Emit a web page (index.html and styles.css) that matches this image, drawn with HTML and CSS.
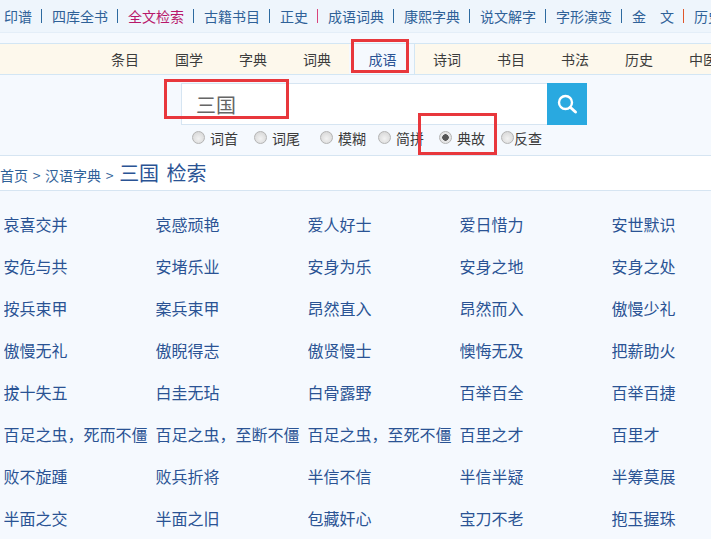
FILE: index.html
```html
<!DOCTYPE html>
<html lang="zh-CN">
<head>
  <meta charset="UTF-8">
  <title>三国 检索</title>
  <link rel="stylesheet" href="styles.css">
</head>
<body>
  <div class="topnav">
    <a class="first">印谱</a>
    <a>四库全书</a>
    <a class="hot">全文检索</a>
    <a>古籍书目</a>
    <a class="short pink">正史</a>
    <a>成语词典</a>
    <a>康熙字典</a>
    <a>说文解字</a>
    <a>字形演变</a>
    <a class="orange jin">金　文</a>
    <a class="last">历史</a>
  </div>

  <div class="tabs">
    <a>条目</a>
    <a>国学</a>
    <a>字典</a>
    <a>词典</a>
    <a class="active">成语</a>
    <a>诗词</a>
    <a>书目</a>
    <a>书法</a>
    <a>历史</a>
    <a>中医</a>
  </div>

  <div class="search">
    <div class="search-row">
      <div class="search-input">三国</div>
      <div class="search-btn">
        <svg width="22" height="22" viewBox="0 0 22 22">
          <circle cx="9.5" cy="9.5" r="6.5" fill="none" stroke="#fff" stroke-width="2.4"/>
          <path d="M14.5 14.5 L19.5 19" stroke="#fff" stroke-width="3" stroke-linecap="round"/>
        </svg>
      </div>
    </div>
    <div class="options">
      <label class="opt w1"><span class="radio"></span>词首</label>
      <label class="opt w2"><span class="radio"></span>词尾</label>
      <label class="opt w3"><span class="radio"></span>模糊</label>
      <label class="opt w4"><span class="radio"></span>简拼</label>
      <label class="opt w5"><span class="radio on"></span>典故</label>
      <label class="opt tight"><span class="radio"></span>反查</label>
    </div>
  </div>

  <div class="crumb">
    <a>首页</a> <span class="gt">&gt;</span> <a>汉语字典</a> <span class="gt">&gt;</span> <span class="crumb-title">三国 检索</span>
  </div>

  <ul class="words">
    <li>哀喜交并</li><li>哀感顽艳</li><li>爱人好士</li><li>爱日惜力</li><li>安世默识</li>
    <li>安危与共</li><li>安堵乐业</li><li>安身为乐</li><li>安身之地</li><li>安身之处</li>
    <li>按兵束甲</li><li>案兵束甲</li><li>昂然直入</li><li>昂然而入</li><li>傲慢少礼</li>
    <li>傲慢无礼</li><li>傲睨得志</li><li>傲贤慢士</li><li>懊悔无及</li><li>把薪助火</li>
    <li>拔十失五</li><li>白圭无玷</li><li>白骨露野</li><li>百举百全</li><li>百举百捷</li>
    <li>百足之虫，死而不僵</li><li>百足之虫，至断不僵</li><li>百足之虫，至死不僵</li><li>百里之才</li><li>百里才</li>
    <li>败不旋踵</li><li>败兵折将</li><li>半信不信</li><li>半信半疑</li><li>半筹莫展</li>
    <li>半面之交</li><li>半面之旧</li><li>包藏奸心</li><li>宝刀不老</li><li>抱玉握珠</li>
  </ul>

  <!-- red marks drawn on top of the page -->
  <div class="mark mark-tab"></div>
  <div class="mark mark-input"></div>
  <div class="mark mark-radio"></div>
</body>
</html>
```

FILE: styles.css
```css
html, body {
  margin: 0;
  padding: 0;
}

body {
  width: 711px;
  height: 539px;
  overflow: hidden;
  position: relative;
  background-color: #f5f9fe;
  font-family: "Noto Sans CJK SC", "Liberation Sans", sans-serif;
  font-size: 14px;
  color: #2a5394;
}

.topnav {
  height: 33px;
  display: flex;
  align-items: center;
  white-space: nowrap;
  background-color: #eef5fc;
  border-bottom: 1px solid #e4eef8;
  box-sizing: border-box;
  padding-left: 4px;
  overflow: hidden;
}

.topnav a {
  line-height: 14px;
  padding: 0 9px 0 10px;
  border-right: 1px solid #2d6aa0;
  color: #2f6198;
}

.topnav a.first {
  padding-left: 0;
}

.topnav a.hot {
  color: #b8186a;
}

.topnav a.pink {
  border-right-color: #d9447c;
}

.topnav a.orange {
  border-right-color: #e0562a;
}

.topnav a.last {
  border-right: none;
}

.tabs {
  margin-top: 10px;
  height: 32px;
  display: flex;
  box-sizing: border-box;
  padding-left: 93px;
  background-color: #fdf8ec;
  border-top: 1px solid #d3e6f4;
  border-bottom: 1px solid #d3e6f4;
  white-space: nowrap;
  overflow: hidden;
}

.tabs a {
  flex: 0 0 64px;
  text-align: center;
  line-height: 30px;
  color: #3c3c3c;
}

.tabs a.active {
  background-color: #f5f9fe;
  color: #2a5394;
  flex-basis: 66px;
  padding-left: 2px;
  border-right: 1px solid #d3e6f4;
  box-sizing: border-box;
}

.search {
  height: 81px;
  box-sizing: border-box;
  padding-top: 8px;
  border-bottom: 1px solid #d6e5f2;
}

.search-row {
  display: flex;
  margin-left: 181px;
}

.search-input {
  width: 366px;
  height: 42px;
  box-sizing: border-box;
  background-color: #fff;
  border: 1px solid #d6e5f2;
  border-right: none;
  padding-left: 14px;
  font-size: 20px;
  line-height: 42px;
  color: #666;
}

.search-btn {
  width: 40px;
  height: 42px;
  background-color: #29a9e0;
  display: flex;
  align-items: center;
  justify-content: center;
}

.options {
  display: flex;
  margin-left: 192px;
  margin-top: 2px;
  color: #3c3c3c;
  line-height: 22px;
}

.opt {
  display: flex;
  align-items: center;
  flex: 0 0 auto;
}

.w1 { width: 62px; }
.w2 { width: 66px; }
.w3 { width: 58px; }
.w4 { width: 61px; }
.w5 { width: 62px; }

.radio {
  width: 13px;
  height: 13px;
  box-sizing: border-box;
  border: 1px solid #b4b4b4;
  border-radius: 50%;
  background: radial-gradient(circle at 50% 60%, #f2f2f2, #d2d2d2);
  margin-right: 5px;
  margin-top: -2px;
}

.tight .radio {
  margin-right: 0;
}

.radio.on {
  background: radial-gradient(circle, #555 0, #555 3px, #e6e6e6 3.5px);
}

.crumb {
  height: 35px;
  box-sizing: border-box;
  background-color: #fff;
  border-bottom: 1px solid #d6e5f2;
  line-height: 34px;
  white-space: nowrap;
  color: #2f6198;
  font-size: 14px;
}

.gt {
  margin: 0 1.5px;
}

.crumb-title {
  font-size: 20px;
  color: #2a5394;
  margin-left: 1px;
  word-spacing: 3px;
}

.words {
  list-style: none;
  margin: 12px 0 0;
  padding: 0 0 0 3.5px;
  display: grid;
  grid-template-columns: repeat(5, 152px);
  grid-auto-rows: 42px;
  font-size: 16px;
}

.words li {
  line-height: 42px;
  white-space: nowrap;
  overflow: hidden;
}

.mark {
  position: absolute;
  box-sizing: border-box;
  border: 3px solid #e8373c;
}

.mark-tab {
  left: 351px;
  top: 39px;
  width: 58px;
  height: 34px;
}

.mark-input {
  left: 164px;
  top: 79px;
  width: 125px;
  height: 40px;
}

.mark-radio {
  left: 418px;
  top: 113px;
  width: 79px;
  height: 42px;
}
```
